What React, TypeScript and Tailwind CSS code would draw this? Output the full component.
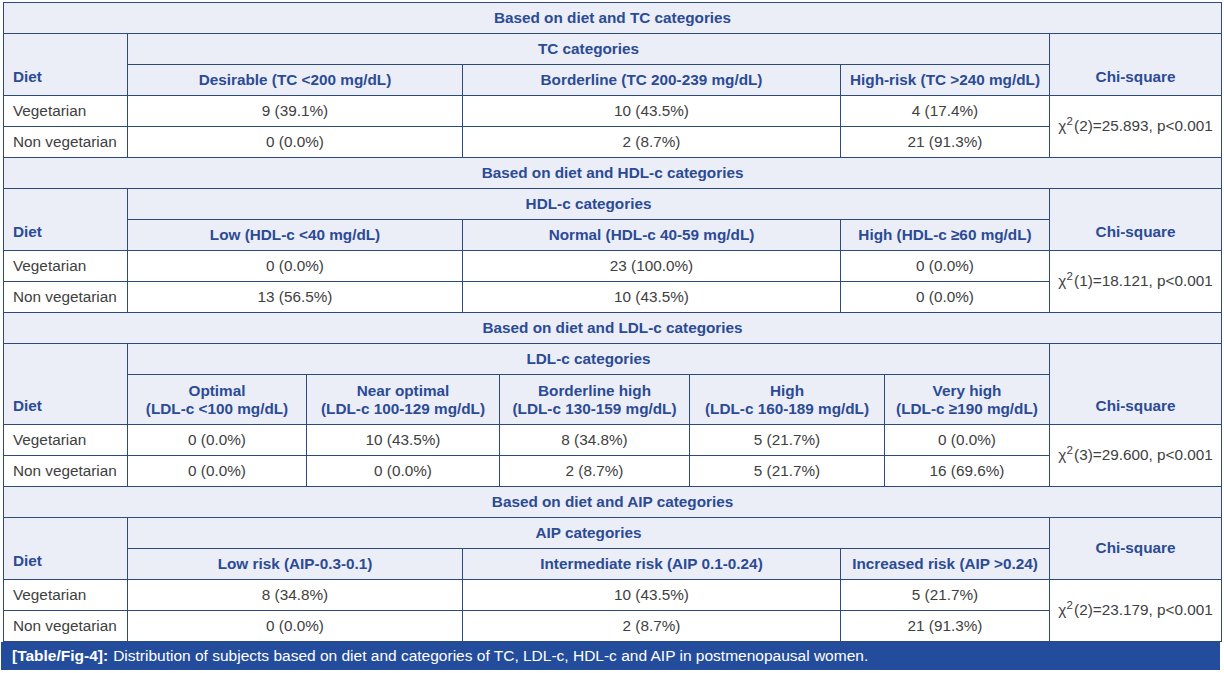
const head = "bg-[#eceef7] text-[#2b4b94] font-bold";
const line = "border border-[#2d4a7c]";

type Row = { diet: string; vals: string[]; chi?: string };

function Title({ text }: { text: string }) {
  return (
    <tr className="h-[31px]">
      <td colSpan={9} className={`${line} ${head} text-center`}>
        {text}
      </td>
    </tr>
  );
}

function Chi({ n, v }: { n: string; v: string }) {
  return (
    <span>
      χ<sup>2</sup>&#8202;({n})={v}, p&lt;0.001
    </span>
  );
}

// spans in the 9-column grid for each value cell
const wide = [2, 3, 2];
const ldl = [1, 2, 1, 2, 1];

function Body({ rows, spans, chi }: { rows: Row[]; spans: number[]; chi: React.ReactNode }) {
  return (
    <>
      {rows.map((r, i) => (
        <tr key={r.diet} className="h-[31px]">
          <td className={`${line} px-[9px] text-left`}>{r.diet}</td>
          {r.vals.map((v, j) => (
            <td key={j} colSpan={spans[j]} className={`${line} text-center`}>
              {v}
            </td>
          ))}
          {i === 0 && (
            <td rowSpan={2} className={`${line} text-center align-middle`}>
              {chi}
            </td>
          )}
        </tr>
      ))}
    </>
  );
}

function Section({
  title,
  cat,
  heads,
  spans,
  rows,
  chi,
  chiMiddle,
}: {
  title: string;
  cat: string;
  heads: React.ReactNode[];
  spans: number[];
  rows: Row[];
  chi: React.ReactNode;
  chiMiddle?: boolean;
}) {
  const two = spans.length === 5;
  return (
    <>
      <Title text={title} />
      <tr className="h-[31px]">
        <td rowSpan={2} className={`${line} ${head} px-[9px] pb-[6px] text-left align-bottom`}>
          Diet
        </td>
        <td colSpan={7} className={`${line} ${head} text-center`}>
          {cat}
        </td>
        <td
          rowSpan={2}
          className={`${line} ${head} text-center ${chiMiddle ? "align-middle" : "align-bottom pb-[6px]"}`}
        >
          Chi-square
        </td>
      </tr>
      <tr className={two ? "h-[50px]" : "h-[31px]"}>
        {heads.map((h, j) => (
          <td key={j} colSpan={spans[j]} className={`${line} ${head} text-center leading-[18px]`}>
            {h}
          </td>
        ))}
      </tr>
      <Body rows={rows} spans={spans} chi={chi} />
    </>
  );
}

export default function App() {
  return (
    <div
      className="w-[1224px] h-[673px] bg-white pt-[2px] pl-[3px] text-[15.3px] text-[#404040]"
      style={{ fontFamily: '"Liberation Sans", Arial, sans-serif' }}
    >
      <table className="w-[1218px] table-fixed border-collapse">
        <colgroup>
          <col className="w-[124px]" />
          <col className="w-[179px]" />
          <col className="w-[156px]" />
          <col className="w-[37px]" />
          <col className="w-[190px]" />
          <col className="w-[151px]" />
          <col className="w-[44px]" />
          <col className="w-[165px]" />
          <col className="w-[172px]" />
        </colgroup>
        <tbody>
          <Section
            title="Based on diet and TC categories"
            cat="TC categories"
            heads={["Desirable (TC <200 mg/dL)", "Borderline (TC 200-239 mg/dL)", "High-risk (TC >240 mg/dL)"]}
            spans={wide}
            rows={[
              { diet: "Vegetarian", vals: ["9 (39.1%)", "10 (43.5%)", "4 (17.4%)"] },
              { diet: "Non vegetarian", vals: ["0 (0.0%)", "2 (8.7%)", "21 (91.3%)"] },
            ]}
            chi={<Chi n="2" v="25.893" />}
          />
          <Section
            title="Based on diet and HDL-c categories"
            cat="HDL-c categories"
            heads={["Low (HDL-c <40 mg/dL)", "Normal (HDL-c 40-59 mg/dL)", "High (HDL-c ≥60 mg/dL)"]}
            spans={wide}
            rows={[
              { diet: "Vegetarian", vals: ["0 (0.0%)", "23 (100.0%)", "0 (0.0%)"] },
              { diet: "Non vegetarian", vals: ["13 (56.5%)", "10 (43.5%)", "0 (0.0%)"] },
            ]}
            chi={<Chi n="1" v="18.121" />}
          />
          <Section
            title="Based on diet and LDL-c categories"
            cat="LDL-c categories"
            heads={[
              <>Optimal<br />(LDL-c &lt;100 mg/dL)</>,
              <>Near optimal<br />(LDL-c 100-129 mg/dL)</>,
              <>Borderline high<br />(LDL-c 130-159 mg/dL)</>,
              <>High<br />(LDL-c 160-189 mg/dL)</>,
              <>Very high<br />(LDL-c ≥190 mg/dL)</>,
            ]}
            spans={ldl}
            rows={[
              { diet: "Vegetarian", vals: ["0 (0.0%)", "10 (43.5%)", "8 (34.8%)", "5 (21.7%)", "0 (0.0%)"] },
              { diet: "Non vegetarian", vals: ["0 (0.0%)", "0 (0.0%)", "2 (8.7%)", "5 (21.7%)", "16 (69.6%)"] },
            ]}
            chi={<Chi n="3" v="29.600" />}
          />
          <Section
            title="Based on diet and AIP categories"
            cat="AIP categories"
            heads={["Low risk (AIP-0.3-0.1)", "Intermediate risk (AIP 0.1-0.24)", "Increased risk (AIP >0.24)"]}
            spans={wide}
            rows={[
              { diet: "Vegetarian", vals: ["8 (34.8%)", "10 (43.5%)", "5 (21.7%)"] },
              { diet: "Non vegetarian", vals: ["0 (0.0%)", "2 (8.7%)", "21 (91.3%)"] },
            ]}
            chi={<Chi n="2" v="23.179" />}
            chiMiddle
          />
        </tbody>
      </table>
      <div className="-ml-[2px] w-[1219px] h-[28px] bg-[#234c9c] px-[11px] flex items-center text-white text-[15.5px]">
        <span className="font-bold mr-[5px]">[Table/Fig-4]:</span>
        Distribution of subjects based on diet and categories of TC, LDL-c, HDL-c and AIP in postmenopausal women.
      </div>
    </div>
  );
}
